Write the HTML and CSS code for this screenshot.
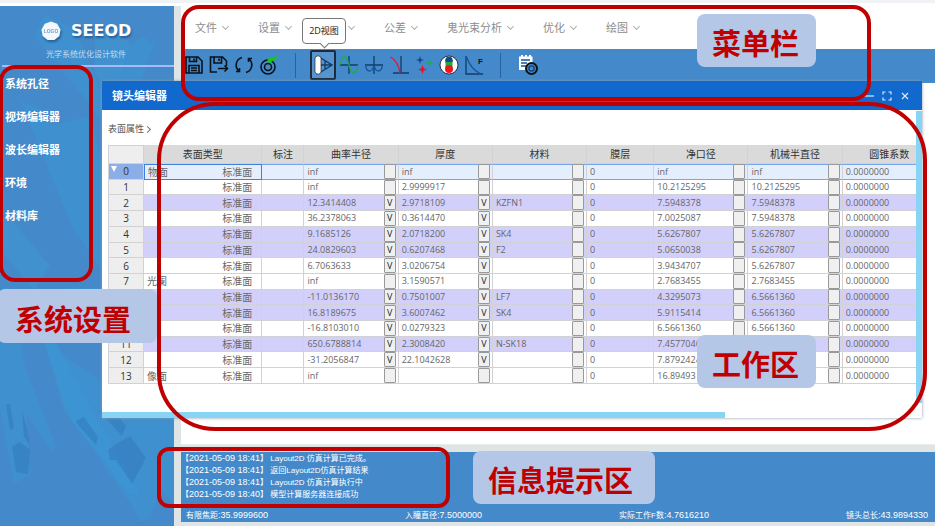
FILE: index.html
```html
<!DOCTYPE html>
<html>
<head>
<meta charset="utf-8">
<title>SEEOD</title>
<link rel="stylesheet" href="styles.css">
</head>
<body>
<div class="strip"></div>
<div class="app">
  <aside class="sidebar">
    <svg class="streaks" viewBox="0 0 174 520" preserveAspectRatio="xMidYMin slice" aria-hidden="true">
      <g fill="#3a97d4" opacity=".5">
        <path d="M45 8l30 16 26 60 15 50-30-40-52-64z"/>
        <path d="M120 48l22-18 12 8-24 70-14 26z"/>
        <path d="M20 95l24 10 60 130 20 60-50-70z"/>
        <path d="M50 120l40-10 30 120-10 40z"/>
        <path d="M62 282l50 0 0 14-22 0z"/>
        <path d="M24 282l36 66 62 40 38 12 14 8v54l-24 48-8 6-14-22-30-44-26-34z"/>
        <path d="M2 282l6 0 18 82 30 76-4 6-26-40 4 62-16 10-12-66-6-26z"/>
        <path d="M94 370l44 20 36 10v100l-26-36z"/>
      </g>
      <g fill="#3aa0d8" opacity=".35">
        <path d="M96 16l34 20-18 60-18-30z"/>
        <path d="M0 200l50 60-16 24-34-40z"/>
        <path d="M30 282l44 90 66 116-10 0-66-84z"/>
      </g>
      <g fill="#3277b8" opacity=".5">
        <path d="M76 415l8-4 14 20-2 8-18-20z"/>
        <path d="M100 406l8-8 18 22-4 10z"/>
        <path d="M108 444l8-6 14-8 16 22-14 26-16-24-6 0z"/>
        <path d="M6 398l4 0 4 24-4 2z"/>
        <path d="M12 440l8-4 10 8-2 24-12-2z"/>
        <path d="M22 405l6 22 2 12-6-8z"/>
      </g>
    </svg>
    <header class="brand">
      <div class="brand-row">
        <svg class="logo" viewBox="0 0 20 20" role="img" aria-label="LOGO">
          <path fill="#f4f8fd" d="M10 .5l6.2 2.2 3.3 5.8-1.1 6.4-5 4.2H6.600l-5-4.200L.5 8.500l3.300-5.800z"/>
          <text class="logo-text" x="10" y="12" text-anchor="middle">LOGO</text>
        </svg>
        <strong class="name">SEEOD</strong>
      </div>
      <p class="tagline">光学系统优化设计软件</p>
    </header>
    <nav class="side-nav">
      <a href="#">系统孔径</a>
      <a href="#">视场编辑器</a>
      <a href="#">波长编辑器</a>
      <a href="#">环境</a>
      <a href="#">材料库</a>
    </nav>
  </aside>
  <main class="main">
    <nav class="menu">
      <button type="button"><span>文件</span><i class="chev"></i></button>
      <button type="button"><span>设置</span><i class="chev"></i></button>
      <button type="button" aria-label="2D视图"><span class="slot"></span><i class="chev"></i></button>
      <button type="button"><span>公差</span><i class="chev"></i></button>
      <button type="button"><span>鬼光束分析</span><i class="chev"></i></button>
      <button type="button"><span>优化</span><i class="chev"></i></button>
      <button type="button"><span>绘图</span><i class="chev"></i></button>
    </nav>
    <div class="toolbar">
      <button type="button" aria-label="save"><svg viewBox="0 0 20 20"><path class="ink" d="M2 2h12l4 4v12H2zM5.500 2v4.500h7V2M10 3.500v2M5 18v-7.500h10V18M7 13h6M7 15.500h6"/></svg></button>
      <button type="button" aria-label="save as"><svg viewBox="0 0 20 20"><path class="ink" d="M8 17H1.500V2h12l4 4v5M5 2v6h7.500V2M10 3.500v2.500M9 13.500h9M15.500 10.500l3 3-3 3"/></svg></button>
      <button type="button" aria-label="refresh"><svg viewBox="0 0 20 20"><path class="ink" d="M8 2.500A7.800 7.800 0 0 0 5 16M2 16.500h3.500v-3.500M12 17.500A7.800 7.800 0 0 0 15 4M18 3.500h-3.500v3.500"/></svg></button>
      <button type="button" aria-label="target"><svg viewBox="0 0 20 20"><circle class="ink" cx="9" cy="12" r="7"/><circle class="ink" cx="9" cy="12" r="3.500"/><path fill="#14c814" d="M7 7l4-5 3 .5 5-2-2 3 2 1-5 1-3 2.500z"/></svg></button>
      <span class="bar"></span>
      <span class="tip-host">
        <button type="button" class="picked" aria-label="2D视图"><svg viewBox="0 0 20 20"><path class="thin" d="M7 2.500L19 10 7 17.500M7 10h12M12 6v8"/><rect x="2" y="1" width="6" height="18" rx="2.500" fill="#fff" stroke="#222" stroke-width=".7"/></svg></button>
        <span class="tip" role="tooltip">2D视图</span>
      </span>
      <button type="button" aria-label="curve"><svg viewBox="0 0 20 20"><path class="thin" d="M10 1v18M1 10h18"/><path class="green" d="M1 10C3-2 7-1 10 10s7 11 9 0"/></svg></button>
      <button type="button" aria-label="field"><svg viewBox="0 0 20 20"><path class="thin" d="M10 1v18M1 10h18"/><path class="blue" d="M1.500 10c1 8 7 8 8.500 0 1.500 8 7.500 8 8.500 0"/></svg></button>
      <button type="button" aria-label="ray"><svg viewBox="0 0 20 20"><path class="thin" d="M12 1v17M4 18h16"/><path class="red" d="M1.500 2C7 5 10 11 11 18"/></svg></button>
      <button type="button" aria-label="spot"><svg viewBox="0 0 20 20"><path fill="#154a8a" d="M6 1l1 3 3 1-3 1-1 3-1-3-3-1 3-1z"/><path fill="#16b53a" d="M15.500 4l1 3 3 1-3 1-1 3-1-3-3-1 3-1z"/><path fill="#e2132a" d="M8.500 10l1.200 3.300 3.300 1.200-3.300 1.200L8.500 19l-1.200-3.300L4 14.500l3.300-1.200z"/></svg></button>
      <button type="button" aria-label="light"><svg viewBox="0 0 20 20"><circle cx="10" cy="10" r="9" fill="#fff" stroke="#111" stroke-width=".8"/><circle cx="10" cy="5.500" r="3.800" fill="#12488c"/><rect x="6.500" y="7" width="7" height="5" fill="#1cae3c"/><circle cx="10" cy="14" r="4" fill="#f0141e"/></svg></button>
      <button type="button" aria-label="F"><svg viewBox="0 0 20 20"><path class="thin" d="M2 1v18h17"/><path class="blue" d="M2.500 2C5 9 9 15 16 18.500"/><text class="f-mark" x="14" y="9">F</text></svg></button>
      <span class="bar"></span>
      <button type="button" aria-label="report"><svg viewBox="0 0 20 20"><path fill="#fff" d="M1 1.500h2V0h2v1.500h2V0h2v1.500h2V0h2v1.500h1.500V15H1z"/><path class="blue" d="M3 5h9M3 8h6M3 11h5"/><circle cx="13.500" cy="13.500" r="5.500" fill="#4489ca" stroke="#111" stroke-width="2"/><circle cx="13.500" cy="13.500" r="2.600" fill="none" stroke="#123f7a" stroke-width="1.300"/></svg></button>
    </div>
    <section class="canvas"></section>
    <section class="log">
      <ul>
        <li>【<time>2021-05-09 18:41</time>】 Layout2D 仿真计算已完成。</li>
        <li>【<time>2021-05-09 18:41</time>】 返回Layout2D仿真计算结果</li>
        <li>【<time>2021-05-09 18:41</time>】 Layout2D 仿真计算执行中</li>
        <li>【<time>2021-05-09 18:40</time>】 模型计算服务器连接成功</li>
      </ul>
      <footer class="status">
        <span>有限焦距<b>:35.9999600</b></span>
        <span>入瞳直径<b>:7.5000000</b></span>
        <span>实际工作F数<b>:4.7616210</b></span>
        <span>镜头总长<b>:43.9894330</b></span>
      </footer>
    </section>
  </main>
</div>

<section class="window">
  <header class="titlebar">
    <h2>镜头编辑器</h2>
    <div class="controls">
      <button type="button" aria-label="minimize"><svg viewBox="0 0 10 10"><path d="M0 5h10"/></svg></button>
      <button type="button" aria-label="maximize"><svg viewBox="0 0 10 10"><path d="M1 3.500V1h2.500M6.500 1H9v2.500M9 6.500V9H6.500M3.500 9H1V6.500"/></svg></button>
      <button type="button" aria-label="close"><svg viewBox="0 0 10 10"><path d="M2 2l6 6M8 2L2 8"/></svg></button>
    </div>
  </header>
  <div class="window-body">
    <div class="sheet-area">
      <button type="button" class="props">表面属性<i class="chev right"></i></button>
      <div class="sheet">
        <table>
          <colgroup><col class="c-num"><col class="c-type"><col class="c-note"><col class="c-val"><col class="c-val"><col class="c-val"><col class="c-coat"><col class="c-val"><col class="c-val"><col class="c-val"></colgroup>
          <thead><tr><td class="corner"></td><th>表面类型</th><th>标注</th><th>曲率半径</th><th>厚度</th><th>材料</th><th>膜层</th><th>净口径</th><th>机械半直径</th><th>圆锥系数</th></tr></thead>
          <tbody id="rows"></tbody>
        </table>
      </div>
    </div>
    <div class="vscroll"></div>
  </div>
  <div class="hscroll"><div class="thumb"></div></div>
</section>

<div class="label label-system">系统设置</div>
<div class="ring ring-menu"></div>
<div class="ring ring-work"></div>
<div class="ring ring-side"></div>
<div class="ring ring-log"></div>
<div class="label label-menu">菜单栏</div>
<div class="label label-work">工作区</div>
<div class="label label-info">信息提示区</div>
<script src="script.js"></script>
</body>
</html>
```

FILE: styles.css
```css
* { box-sizing: border-box; }
body {
  margin: 0;
  min-height: 100vh;
  display: flex;
  flex-direction: column;
  position: relative;
  overflow: hidden;
  background: #fff;
  color: #333;
  font: 10px/12px "Open Sans", "Noto Sans CJK SC", sans-serif;
}
button {
  margin: 0;
  padding: 0;
  border: 0;
  background: none;
  color: inherit;
  font: inherit;
}
a { color: inherit; text-decoration: none; }
h2, p, ul { margin: 0; padding: 0; }

.strip { height: 6px; border-bottom: 3px solid #fff; background: #f1f2f6; }
.app {
  flex: 1;
  display: grid;
  grid-template-columns: 174px minmax(0, 1fr);
  gap: 7px;
  background: #dfe4e4;
}

/* Sidebar */
.sidebar { position: relative; background: #4489ca; color: #fff; overflow: hidden; }
.streaks { position: absolute; inset: 0; width: 100%; height: 100%; }
.brand {
  position: relative;
  height: 61px;
  margin-left: 2px;
  padding-top: 14px;
  border-bottom: 2px solid #a9b9f3;
}
.brand-row { display: flex; align-items: center; gap: 10px; padding-left: 39px; height: 22px; }
.logo { width: 20px; height: 20px; filter: drop-shadow(1px 2px 1px #2a5f95); }
.logo-text { font: bold 5px "Liberation Sans", sans-serif; fill: #6c9fd2; }
.name { font: bold 16px/20px "DejaVu Sans", sans-serif; text-shadow: 1px 2px 2px #2a5f95; }
.tagline { margin-top: 6px; padding-right: 4px; text-align: center; font-size: 8px; line-height: 12px; color: #c3dcf2; }
.side-nav { position: relative; padding: 0 5px; display: flex; flex-direction: column; }
.side-nav a { font-size: 11px; line-height: 33px; font-weight: bold; }

/* Menu and toolbar */
.main { display: flex; flex-direction: column; min-width: 0; }
.menu { height: 43px; padding-left: 14px; display: flex; align-items: center; gap: 29px; background: #fff; color: #8d8d8d; }
.menu button { display: flex; align-items: center; gap: 6px; font-size: 11px; line-height: 16px; }
.slot { width: 22px; }
.chev { width: 5px; height: 5px; margin: 0 1px 3px 0; border: solid #b0b0b0; border-width: 0 1px 1px 0; transform: rotate(45deg); }
.chev.right { margin: 0; border-color: #777; transform: rotate(-45deg); }
.toolbar { height: 34px; display: flex; align-items: center; padding-bottom: 2px; background: #4489ca; }
.toolbar button { display: flex; align-items: center; justify-content: center; width: 25px; height: 30px; }
.toolbar svg { width: 20px; height: 20px; flex: none; }
.toolbar .picked { width: 26px; border: 2px solid #1c2c3c; border-radius: 2px; background: #5594cf; }
.bar { width: 1px; height: 25px; margin: 0 14px; background: #2862a0; }
.ink { fill: none; stroke: #0b1118; stroke-width: 1.600; }
.thin { fill: none; stroke: #123c66; stroke-width: 1.300; }
.green { fill: none; stroke: #1cac4c; stroke-width: 1.300; }
.blue { fill: none; stroke: #15549a; stroke-width: 1.300; }
.red { fill: none; stroke: #d81c3c; stroke-width: 1.400; }
.f-mark { font: bold 8px "Liberation Sans", sans-serif; fill: #0b1118; }
.tip-host { position: relative; }
.tip {
  position: absolute;
  left: -8px;
  bottom: 36px;
  width: 44px;
  padding: 6px 0;
  border: 1px solid #777;
  border-radius: 4px;
  background: #fff;
  color: #222;
  text-align: center;
  white-space: nowrap;
  font-size: 9px;
}
.tip::after {
  content: "";
  position: absolute;
  left: 18px;
  bottom: -4px;
  width: 6px;
  height: 6px;
  border: solid #777;
  border-width: 0 1px 1px 0;
  background: #fff;
  transform: rotate(45deg);
}
.canvas { flex: 1; background: #fff; border-bottom: 1px solid #e8ecec; }

/* Log and status */
.log { margin: 7px 0 4px; padding: 1px 7px 0 5px; background: #4489ca; color: #fff; font: 8px/12px "Liberation Sans", "Noto Sans CJK SC", sans-serif; }
.log ul { list-style: none; margin-left: -5px; }
.log li { height: 12px; line-height: 12px; white-space: pre; }
.log time, .status b { font-size: 9px; line-height: 8px; font-weight: normal; }
.status { display: flex; justify-content: space-between; height: 12px; margin-top: 9px; line-height: 12px; }

/* Editor window */
.window {
  position: absolute;
  left: 102px;
  right: 13px;
  top: 81px;
  background: #fff;
  box-shadow: 0 0 3px #8a9aaa;
}
.titlebar { height: 29px; padding: 0 12px 0 10px; display: flex; align-items: center; justify-content: space-between; background: #1169cd; color: #fff; }
.titlebar h2 { font-size: 11px; line-height: 16px; }
.controls { display: flex; gap: 8px; }
.controls svg { display: block; width: 10px; height: 10px; fill: none; stroke: #dfeaf8; stroke-width: 1.200; }
.window-body { display: flex; align-items: flex-start; }
.sheet-area { flex: 1; min-width: 0; padding: 12px 0 28px 6px; }
.props { display: flex; align-items: center; gap: 1px; font-size: 9px; line-height: 14px; color: #555; }
.sheet { margin-top: 9px; overflow: hidden; }
.vscroll { width: 6px; height: 292px; margin-top: 1px; background: #87d4f5; }
.hscroll { height: 6px; }
.thumb { width: 76%; height: 6px; background: #87d4f5; }

table { width: 829px; height: 239px; table-layout: fixed; border-collapse: separate; border-spacing: 0; }
.c-num { width: 36px; }
.c-type { width: 118px; }
.c-note { width: 42px; }
.c-val { width: 94px; }
.c-coat { width: 67px; }
th, td { padding: 0; border: solid #d2d2d4; border-width: 0 1px 1px 0; font-weight: normal; }
thead th, .corner { height: 19px; font-size: 10px; line-height: 18px; background: #dadada; color: #333; }
.corner { background: #eee; border-left-width: 1px; border-top-width: 1px; }
tbody th { position: relative; height: 15px; background: #eee; border-left-width: 1px; font-size: 10px; line-height: 12px; }
tbody td { height: 15px; color: #666; font-size: 9px; line-height: 12px; }
.type, .cell { display: flex; align-items: center; justify-content: space-between; padding: 0 2px 0 3px; }
.type { padding-right: 9px; font-size: 10px; line-height: 12px; }
.shade td { background: #d2d0fb; }
.current td { background: #e4eefd; border-bottom-color: #77a6ee; border-top: 1px solid #77a6ee; }
.current th { background: #8cade5; }
.current td:nth-child(2) { border: 1px solid #3f7fe0; }
.arrow { position: absolute; left: 2px; top: 2px; border: 3px solid transparent; border-top: 6px solid #fff; }
.flag {
  flex: none;
  width: 12px;
  height: 15px;
  margin: -2px 0;
  border: 1px solid #999;
  border-radius: 1px;
  background: #f0f0f0;
  color: #222;
  font-size: 9px;
  line-height: 12px;
}

/* Callouts drawn over the interface */
.ring { position: absolute; border: 4px solid #c00000; pointer-events: none; }
.ring-menu { left: 181px; top: 5px; right: 64px; height: 96px; border-radius: 18px; }
.ring-work { left: 157px; top: 102px; right: 8px; height: 329px; border-radius: 58px; }
.ring-side { left: -1px; top: 65px; width: 94px; height: 217px; border-radius: 16px; }
.ring-log { left: 157px; top: 447px; width: 293px; height: 61px; border-radius: 12px; }
.label {
  position: absolute;
  padding: 12px 17px 9px 15px;
  border-radius: 8px;
  background: #b4c7e7;
  color: #c00000;
  font: bold 29px/32px "Noto Sans CJK SC", sans-serif;
  white-space: nowrap;
}
.label-menu { left: 697px; top: 14px; }
.label-work { left: 697px; top: 335px; }
.label-info { left: 473px; top: 451px; padding-right: 22px; }
.label-system { left: -3px; top: 289px; padding: 13px 26px 9px 18px; }
```

FILE: script.js
```js
// kind, surface, radius, radius flag, thickness, thickness flag, material, clear aperture, mechanical aperture
const surfaces = [
  ["current", "物面", "inf", "", "inf", "", "", "inf", "inf"],
  ["", "", "inf", "", "2.9999917", "", "", "10.2125295", "10.2125295"],
  ["shade", "", "12.3414408", "V", "2.9718109", "V", "KZFN1", "7.5948378", "7.5948378"],
  ["", "", "36.2378063", "V", "0.3614470", "V", "", "7.0025087", "7.5948378"],
  ["shade", "", "9.1685126", "V", "2.0718200", "V", "SK4", "5.6267807", "5.6267807"],
  ["shade", "", "24.0829603", "V", "0.6207468", "V", "F2", "5.0650038", "5.6267807"],
  ["", "", "6.7063633", "V", "3.0206754", "V", "", "3.9434707", "5.6267807"],
  ["", "光阑", "inf", "", "3.1590571", "V", "", "2.7683455", "2.7683455"],
  ["shade", "", "-11.0136170", "V", "0.7501007", "V", "LF7", "4.3295073", "6.5661360"],
  ["shade", "", "16.8189675", "V", "3.6007462", "V", "SK4", "5.9115414", "6.5661360"],
  ["", "", "-16.8103010", "V", "0.0279323", "V", "", "6.5661360", "6.5661360"],
  ["shade", "", "650.6788814", "V", "2.3008420", "V", "N-SK18", "7.4577046", ""],
  ["", "", "-31.2056847", "V", "22.1042628", "V", "", "7.8792424", ""],
  ["", "像面", "inf", "", "", "", "", "16.89493", ""]
];

// Rows whose number lies beneath the side callout carry no number
const unnumbered = [8, 9, 10];

const flagged = (value, flag) =>
  `<td><div class="cell"><span>${value}</span><button type="button" class="flag">${flag}</button></div></td>`;
const plain = value => `<td><div class="cell">${value}</div></td>`;

document.getElementById("rows").innerHTML = surfaces.map((s, i) => {
  const [kind, surface, radius, rFlag, thick, tFlag, material, clear, mech] = s;
  const number = unnumbered.includes(i) ? "" : i;
  return `<tr class="${kind}"><th>${i === 0 ? '<i class="arrow"></i>' : ""}${number}</th>` +
    `<td><div class="type"><span>${surface}</span><span>标准面</span></div></td><td></td>` +
    flagged(radius, rFlag) + flagged(thick, tFlag) + flagged(material, "") +
    plain("0") + flagged(clear, "") + flagged(mech, "") + plain("0.0000000") + "</tr>";
}).join("");
```
